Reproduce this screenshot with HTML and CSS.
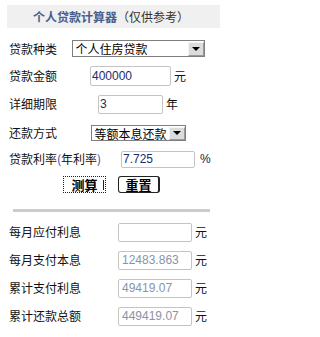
FILE: index.html
```html
<!DOCTYPE html>
<html lang="zh-CN">
<head>
<meta charset="utf-8">
<title>个人贷款计算器</title>
<link rel="stylesheet" href="styles.css">
</head>
<body>
<div class="calc">
  <div class="head"><b class="title">个人贷款计算器</b><span class="note">（仅供参考）</span></div>
  <form class="form">
    <div class="row r1">
      <span class="lbl">贷款种类</span>
      <div class="cell">
        <span class="sel sel-wide"><select><option>个人住房贷款</option></select><span class="arrow"></span></span>
      </div>
    </div>
    <div class="row r2">
      <span class="lbl">贷款金额</span>
      <div class="cell"><input class="txt txt-amount" type="text" value="400000"><span class="unit">元</span></div>
    </div>
    <div class="row r3">
      <span class="lbl">详细期限</span>
      <div class="cell"><input class="txt txt-term" type="text" value="3"><span class="unit">年</span></div>
    </div>
    <div class="row r4">
      <span class="lbl">还款方式</span>
      <div class="cell">
        <span class="sel sel-narrow"><select><option>等额本息还款</option></select><span class="arrow"></span></span>
      </div>
    </div>
    <div class="row r5">
      <span class="lbl lbl-rate">贷款利率<span class="paren">(</span>年利率<span class="paren">)</span></span>
      <input class="txt txt-rate" type="text" value="7.725"><span class="pct">%</span>
    </div>
    <div class="row btns">
      <button type="button" class="btn btn-calc">测算</button>
      <button type="reset" class="btn btn-reset">重置</button>
    </div>
  </form>
  <div class="divider"></div>
  <div class="results">
    <div class="res-row"><span class="res-lbl">每月应付利息</span><input class="out" type="text" value="" readonly><span class="unit">元</span></div>
    <div class="res-row"><span class="res-lbl">每月支付本息</span><input class="out" type="text" value="12483.863" readonly><span class="unit">元</span></div>
    <div class="res-row"><span class="res-lbl">累计支付利息</span><input class="out" type="text" value="49419.07" readonly><span class="unit">元</span></div>
    <div class="res-row"><span class="res-lbl">累计还款总额</span><input class="out" type="text" value="449419.07" readonly><span class="unit">元</span></div>
  </div>
</div>
</body>
</html>
```
FILE: styles.css
```css
html, body {
  margin: 0;
  padding: 0;
  background: #fff;
}
body {
  font-family: "Noto Sans CJK SC", "Liberation Sans", sans-serif;
  font-size: 12px;
  color: #111;
  width: 220px;
}
.calc {
  padding-top: 5px;
}
.head {
  margin-left: 7px;
  height: 23px;
  line-height: 23px;
  background: #f0f0f0;
  padding-left: 26px;
  white-space: nowrap;
}
.title {
  color: #4a5e8e;
  font-weight: bold;
}
.note {
  color: #333;
}
.form {
  margin: 0;
  padding-top: 7px;
}
.row {
  display: flex;
  align-items: center;
  white-space: nowrap;
}
.r1 { height: 27px; }
.r2 { height: 28px; }
.r3 { height: 28px; }
.r4 { height: 29px; }
.r5 { height: 24px; }
.btns { height: 26px; padding-left: 63px; gap: 12px; }
.lbl {
  box-sizing: border-box;
  width: 56px;
  padding-left: 9px;
  line-height: 16px;
}
.lbl-rate {
  width: 112px;
}
.paren {
  color: #2a3f9a;
}
.cell {
  flex: 1;
  display: flex;
  justify-content: center;
  align-items: center;
}
.sel {
  position: relative;
  display: inline-block;
}
.sel select {
  appearance: none;
  -webkit-appearance: none;
  box-sizing: border-box;
  display: block;
  margin: 0;
  border: 1px solid #7f7f7f;
  border-radius: 0;
  background: #fff;
  font-family: "Noto Sans CJK SC", sans-serif;
  font-size: 12px;
  color: #000;
  padding: 0 0 0 3px;
  line-height: 15px;
}
.sel-wide select { width: 133px; height: 17px; }
.sel-narrow select { width: 95px; height: 16px; }
.arrow {
  position: absolute;
  right: 1px;
  top: 2px;
  bottom: 1px;
  width: 16px;
  box-sizing: border-box;
  background: #dcdcdc;
  border: 1px solid #9a9a9a;
  border-top-color: #f4f4f4;
  border-left-color: #f4f4f4;
}
.arrow::after {
  content: "";
  position: absolute;
  left: 50%;
  top: 50%;
  margin-left: -4px;
  margin-top: -2px;
  border-style: solid;
  border-width: 4px 4px 0 4px;
  border-color: #000 transparent transparent transparent;
}
.txt, .out {
  box-sizing: border-box;
  margin: 0;
  border: 1px solid #c4c4c4;
  border-radius: 2px;
  background: #fff;
  font-family: "Liberation Sans", Arial, sans-serif;
  font-size: 12px;
  outline: none;
}
.txt {
  color: #1c2a6e;
  padding: 0 0 0 1px;
}
.txt-amount { width: 81px; height: 20px; }
.txt-term { width: 65px; height: 19px; }
.txt-rate { width: 74px; height: 17px; margin-left: 9px; }
.unit {
  margin-left: 3px;
  line-height: 16px;
}
.pct {
  margin-left: 5px;
  font-family: "Liberation Sans", Arial, sans-serif;
  color: #1a1a40;
}
.btn {
  box-sizing: border-box;
  height: 17px;
  width: 43px;
  margin: 0;
  padding: 0;
  background: #fff;
  font-family: "Noto Sans CJK SC", sans-serif;
  font-size: 13px;
  font-weight: bold;
  line-height: 13px;
  color: #000;
}
.btn-calc {
  position: relative;
  border: 1px dotted #222;
  border-radius: 0;
}
.btn-calc::after {
  content: "";
  position: absolute;
  right: 1px;
  top: 3px;
  bottom: 2px;
  width: 1px;
  background: #222;
}
.btn-reset {
  width: 42px;
  border: 1px solid #222;
  border-right-width: 2px;
  border-radius: 3px;
}
.divider {
  margin: 12px 10px 0 13px;
  height: 3px;
  background: #cccccc;
}
.results {
  padding-top: 6px;
}
.res-row {
  display: flex;
  align-items: center;
  height: 28px;
  white-space: nowrap;
}
.res-lbl {
  box-sizing: border-box;
  width: 118px;
  padding-left: 9px;
  line-height: 16px;
}
.out {
  width: 74px;
  height: 19px;
  color: #8a93a8;
  padding: 0 0 0 3px;
}
```
